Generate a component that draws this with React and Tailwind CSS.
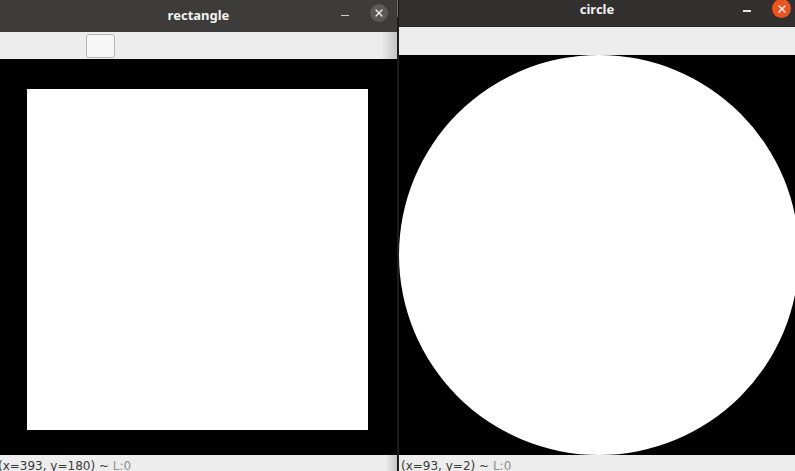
import { X } from 'lucide-react';

function TitleBar({ title, dark, closeBg, height, textTop }) {
  return (
    <div
      className={`relative flex justify-center ${dark} ${height}`}
      style={{ fontFamily: '"Noto Sans", "DejaVu Sans", sans-serif' }}
    >
      <span className={`text-[13px] font-bold text-[#f2f2f2] leading-none ${textTop}`}>{title}</span>
    </div>
  );
}

function StatusBar({ text, shift, height }) {
  return (
    <div
      className={`bg-[#ededed] overflow-hidden whitespace-nowrap ${height}`}
      style={{ fontFamily: '"DejaVu Sans", sans-serif' }}
    >
      <div className={`pt-[4px] text-[12px] leading-[14px] text-[#3a3a3a] ${shift}`}>
        {text} ~ <span className="text-[#8f8f8f]">L:0</span>
      </div>
    </div>
  );
}

export default function App() {
  return (
    <div className="flex w-[795px] h-[471px] overflow-hidden bg-black">
      {/* rectangle window */}
      <div className="relative flex flex-col w-[397px] shrink-0">
        <TitleBar title="rectangle" dark="bg-[#3d3c3a]" height="h-[32px]" textTop="pt-[9px]" />
        <span className="absolute left-[341px] top-[15px] w-[8px] h-[1px] bg-[#d0d0d0]" />
        <span className="absolute left-[370px] top-[4px] w-[18px] h-[18px] rounded-full bg-[#5b5a58] flex items-center justify-center">
          <X size={12} strokeWidth={2.5} color="#f4f4f4" />
        </span>
        <div className="h-[28px] flex bg-gradient-to-r from-[#ededed] from-[96%] to-[#c4c4c4]">
          <div className="ml-[86px] mt-[2px] w-[29px] h-[24px] rounded-[3px] border border-[#b4b4b4] bg-[#f7f7f7]" />
        </div>
        <div className="h-[400px] bg-black pl-[27px] pt-[30px]">
          <div className="w-[341px] h-[341px] bg-white" />
        </div>
        <div className="relative">
          <StatusBar text="(x=393, y=180)" shift="ml-[-2px]" height="h-[16px]" />
          <div className="absolute right-0 top-0 w-[12px] h-[16px] bg-gradient-to-r from-transparent to-[#c4c4c4]" />
        </div>
      </div>

      {/* seam */}
      <div className="w-[2px] shrink-0 flex flex-col bg-[#1c1c1c]">
        <div className="h-[17px] w-[1px] bg-[#6c6c6c]" />
      </div>

      {/* circle window */}
      <div className="relative flex flex-col flex-1 overflow-hidden">
        <TitleBar title="circle" dark="bg-[#31302f]" height="h-[26px]" textTop="pt-[3px]" />
        <span className="absolute left-[344px] top-[10px] w-[8px] h-[1.5px] bg-[#e8e8e8]" />
        <span className="absolute left-[373px] top-[-1px] w-[19px] h-[19px] rounded-full bg-[#e95420] flex items-center justify-center">
          <X size={12} strokeWidth={2.5} color="#ffffff" />
        </span>
        <div className="h-[1px] bg-[#262626]" />
        <div className="h-[28px] bg-[#ededed]" />
        <div className="h-[400px] bg-black overflow-hidden">
          <div className="w-[400px] h-[400px] rounded-full bg-white" />
        </div>
        <StatusBar text="(x=93, y=2)" shift="ml-[2px]" height="h-[16px]" />
      </div>
    </div>
  );
}
